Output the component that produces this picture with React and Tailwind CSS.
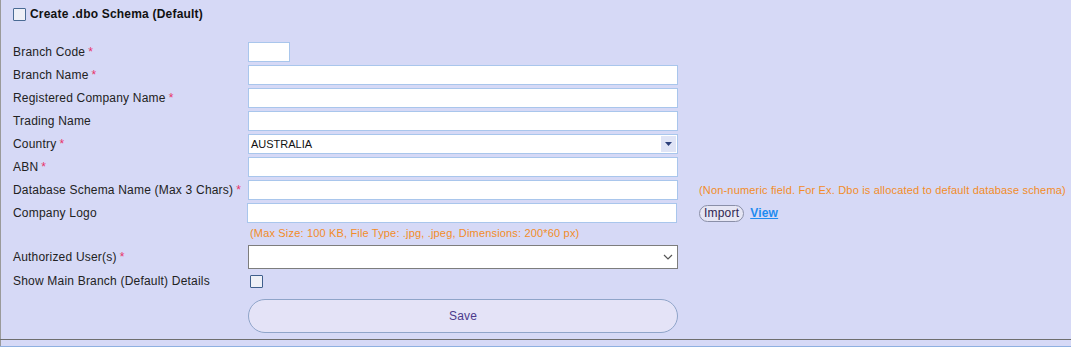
import React from 'react';

const font = { fontFamily: '"Liberation Sans", Arial, sans-serif' };

function Req() {
  return <span className="text-[#e8336a] ml-[3px]">*</span>;
}

function TextBox({ wide = true }) {
  return (
    <div
      className={`h-[20px] bg-white border border-[#a9c6ec] ${wide ? 'w-[430px]' : 'w-[42px]'}`}
    />
  );
}

function Row({ label, required, children }) {
  return (
    <div className="flex items-center h-[20px]">
      <div className="w-[235px] shrink-0 text-[12px] text-[#222] tracking-[0.2px] whitespace-nowrap">
        {label}
        {required && <Req />}
      </div>
      {children}
    </div>
  );
}

export default function App() {
  return (
    <div style={font} className="w-[1071px] h-[363px] bg-white">
      <div className="h-[339px] bg-[#d6d9f6] border-l border-[#9a9a9a] pl-[12px] pt-[7px]">
        {/* Create schema checkbox */}
        <div className="flex items-center h-[14px]">
          <span className="w-[13px] h-[13px] border border-[#4a6b94] bg-[#eef0f7] rounded-[1px]" />
          <span className="ml-[4px] text-[12px] font-bold text-[#111] tracking-[0.2px]">Create .dbo Schema (Default)</span>
        </div>

        <div className="mt-[21px] flex flex-col gap-[3px]">
          <Row label="Branch Code" required>
            <TextBox wide={false} />
          </Row>
          <Row label="Branch Name" required>
            <TextBox />
          </Row>
          <Row label="Registered Company Name" required>
            <TextBox />
          </Row>
          <Row label="Trading Name">
            <TextBox />
          </Row>
          <Row label="Country" required>
            <div className="w-[430px] h-[20px] bg-white border border-[#a9c6ec] flex items-center justify-between pl-[2px] pr-[1px]">
              <span className="text-[11px] text-[#111]">AUSTRALIA</span>
              <span className="w-[15px] h-[16px] bg-[#dfe4f6] flex items-center justify-center">
                <svg width="7" height="4" viewBox="0 0 7 4">
                  <path d="M0 0H7L3.5 4Z" fill="#2b3f7a" />
                </svg>
              </span>
            </div>
          </Row>
          <Row label="ABN" required>
            <TextBox />
          </Row>
          <Row label="Database Schema Name (Max 3 Chars)" required>
            <TextBox />
            <span className="ml-[21px] text-[11px] text-[#f28c28] whitespace-nowrap tracking-[0.17px]">
              (Non-numeric field. For Ex. Dbo is allocated to default database schema)
            </span>
          </Row>
          <Row label="Company Logo">
            <div className="-ml-[1px] w-[430px] h-[20px] bg-white border border-[#a9c6ec]" />
            <span className="ml-[22px] h-[17px] px-[4px] rounded-full border border-[#8a8fa8] bg-[#e6e6f4] text-[12px] text-[#2f2550] flex items-center tracking-[0.2px]">
              Import
            </span>
            <a className="ml-[6px] text-[12px] font-bold text-[#1e8cf0] underline tracking-[0.2px]">View</a>
          </Row>
        </div>

        <div className="ml-[237px] mt-[3px] text-[11px] text-[#f28c28] h-[14px] leading-[14px] tracking-[0.17px]">
          (Max Size: 100 KB, File Type: .jpg, .jpeg, Dimensions: 200*60 px)
        </div>

        <div className="mt-[5px] flex items-center h-[24px]">
          <div className="w-[235px] shrink-0 text-[12px] text-[#222] tracking-[0.2px]">
            Authorized User(s)
            <Req />
          </div>
          <div className="w-[430px] h-[24px] bg-white border border-[#7d7d7d] flex items-center justify-end pr-[4px]">
            <svg width="10" height="6" viewBox="0 0 10 6">
              <path d="M1 1L5 5L9 1" fill="none" stroke="#555" strokeWidth="1.2" />
            </svg>
          </div>
        </div>

        <div className="mt-[3px] flex items-center h-[18px]">
          <div className="w-[237px] shrink-0 text-[12px] text-[#222] tracking-[0.2px] whitespace-nowrap">Show Main Branch (Default) Details</div>
          <span className="w-[13px] h-[13px] border border-[#3f5f8c] bg-[#eef0f7] rounded-[1px]" />
        </div>

        <div className="mt-[9px] ml-[235px] w-[430px] h-[34px] rounded-full border border-[#8fa4c9] bg-[#e4e3f7] flex items-center justify-center text-[12px] text-[#4b3a8c] tracking-[0.2px]">
          Save
        </div>
      </div>
      <div className="h-[1px] bg-[#6e6e6e]" />
      <div className="h-[6px] bg-[#d6d9f6] border-l border-[#9a9a9a]" />
      <div className="h-[1px] bg-[#8fb0e0]" />
    </div>
  );
}
